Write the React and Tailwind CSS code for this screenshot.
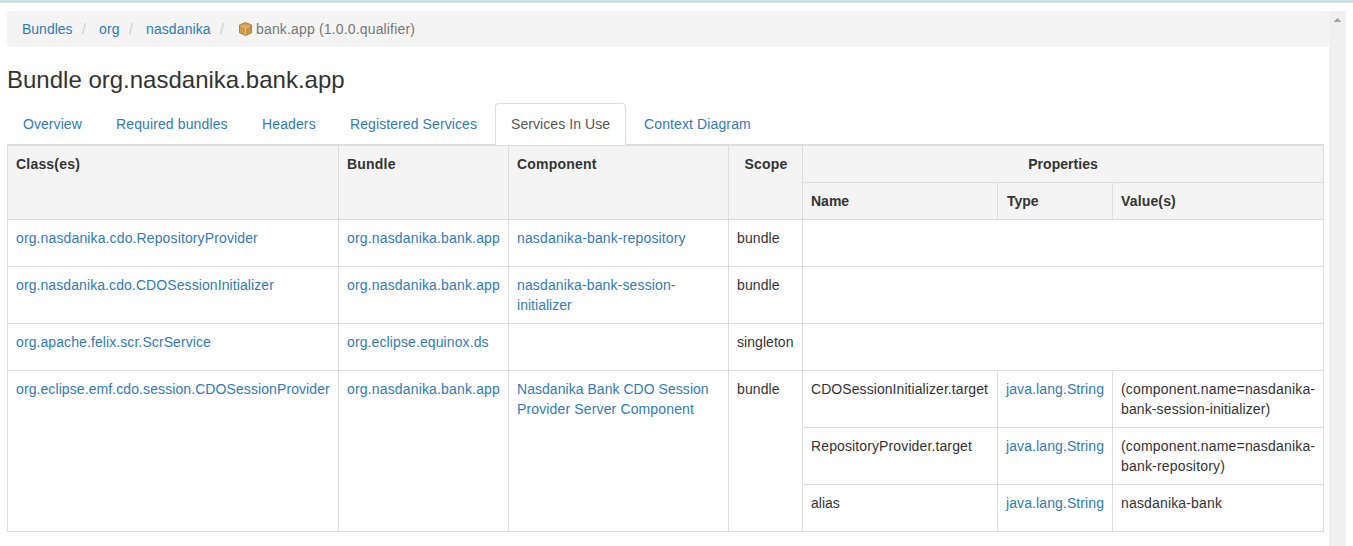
function Link({ children, className = "" }) {
  return <a className={`text-[#337ab7] ${className}`}>{children}</a>;
}

function BundleIcon() {
  return (
    <svg width="16" height="16" viewBox="0 0 16 16" className="mr-[3px] -ml-px block shrink-0">
      <path d="M8.500 1.500 14.500 4v7.800L8.500 14.500 2.500 11.800V4z" fill="#cf9c4c" stroke="#a98045" strokeWidth="1" strokeLinejoin="round" />
      <path d="M8.500 6.500 14 4.400v7.200L8.500 14z" fill="#c79445" />
      <path d="M8.500 6.500V13.500M3.500 4.500l5 2 5-2" stroke="#e6c384" strokeWidth="1" fill="none" />
      <path d="M6 3.200 11 5.500v2.500" stroke="#e0b870" strokeWidth="0.800" fill="none" />
    </svg>
  );
}

function Th({ className = "text-left tracking-[0.2px]", children, ...rest }) {
  return (
    <th className={`border-r border-b border-[#ddd] bg-[#f4f4f4] px-2 pt-2 align-top font-bold ${className}`} {...rest}>
      {children}
    </th>
  );
}

function Td({ className = "", children, ...rest }) {
  return (
    <td className={`border-r border-b border-[#ddd] px-2 pt-2 align-top whitespace-nowrap ${className}`} {...rest}>
      {children}
    </td>
  );
}

const tabs = [
  { label: "Overview", width: "w-[93px] tracking-[0.06px]" },
  { label: "Required bundles", width: "w-[146px] tracking-[0.12px]" },
  { label: "Headers", width: "w-[88px] tracking-[0.12px]" },
  { label: "Registered Services", width: "w-[161px] tracking-[0.09px]" },
  { label: "Services In Use", width: "w-[131px] mr-0.5 tracking-[0.07px]", active: true },
  { label: "Context Diagram", width: "w-[139px] tracking-[0.12px]" },
];

export default function App() {
  return (
    <div className="flex h-[546px] w-[1353px] flex-col overflow-hidden bg-white font-['Liberation_Sans',Arial,sans-serif] text-[14px] leading-5 text-[#333]">
      <div className="h-[3px] shrink-0 border-b border-[#ddd] bg-[#c4e3f0]" />
      <div className="mt-2 flex min-h-0 flex-1 pl-[7px]">
        <main className="w-[1322px] shrink-0">
          <ol className="flex h-9 items-center rounded bg-[#f4f4f4] pl-[15px]">
            <li className="w-[60px]"><Link>Bundles</Link></li>
            <li className="w-[17px] text-[#ccc]">/</li>
            <li className="w-[30px]"><Link className="tracking-[0.1px]">org</Link></li>
            <li className="w-[17px] text-[#ccc]">/</li>
            <li className="w-[74px]"><Link className="tracking-[0.1px]">nasdanika</Link></li>
            <li className="w-[17px] text-[#ccc]">/</li>
            <li className="flex items-center pl-px text-[#777]">
              <BundleIcon />
              <span className="tracking-[0.16px]">bank.app (1.0.0.qualifier)</span>
            </li>
          </ol>
          <h3 className="mt-5 mb-[10px] text-[24px] leading-[26px]">Bundle org.nasdanika.bank.app</h3>
          <nav className="relative z-10 flex h-[42px] w-[1317px] border-b border-[#ddd]">
            {tabs.map((t) => (
              <div
                key={t.label}
                className={`h-[42px] rounded-t border px-[15px] py-[10px] whitespace-nowrap ${t.width} ${
                  t.active ? "border-[#ddd] border-b-white bg-white text-[#555]" : "border-transparent text-[#337ab7]"
                }`}
              >
                {t.label}
              </div>
            ))}
          </nav>
          <table className="w-[1317px] table-fixed border-separate border-spacing-0 border-t border-l border-[#ddd]">
            <colgroup>
              <col className="w-[331px]" />
              <col className="w-[170px]" />
              <col className="w-[220px]" />
              <col className="w-[74px]" />
              <col className="w-[195px]" />
              <col className="w-[115px]" />
              <col className="w-[211px]" />
            </colgroup>
            <thead>
              <tr className="h-[37px]">
                <Th rowSpan={2}>Class(es)</Th>
                <Th rowSpan={2}>Bundle</Th>
                <Th rowSpan={2}>Component</Th>
                <Th rowSpan={2} className="pl-[9px] text-center tracking-[0.15px]">Scope</Th>
                <Th colSpan={3} className="text-center tracking-[0.05px]">Properties</Th>
              </tr>
              <tr className="h-[37px]">
                <Th className="text-left">Name</Th>
                <Th className="pl-[9px] text-left">Type</Th>
                <Th className="text-left tracking-[0.15px]">Value(s)</Th>
              </tr>
            </thead>
            <tbody>
              <tr className="h-[47px]">
                <Td><Link className="tracking-[0.125px]">org.nasdanika.cdo.RepositoryProvider</Link></Td>
                <Td><Link className="tracking-[0.16px]">org.nasdanika.bank.app</Link></Td>
                <Td><Link className="tracking-[0.15px]">nasdanika-bank-repository</Link></Td>
                <Td className="tracking-[0.1px]">bundle</Td>
                <Td colSpan={3} />
              </tr>
              <tr className="h-[57px]">
                <Td><Link className="tracking-[0.09px]">org.nasdanika.cdo.CDOSessionInitializer</Link></Td>
                <Td><Link className="tracking-[0.16px]">org.nasdanika.bank.app</Link></Td>
                <Td>
                  <Link className="tracking-[0.13px]">nasdanika-bank-session-<br /><span className="tracking-[0.03px]">initializer</span></Link>
                </Td>
                <Td className="tracking-[0.1px]">bundle</Td>
                <Td colSpan={3} />
              </tr>
              <tr className="h-[47px]">
                <Td><Link className="tracking-[0.09px]">org.apache.felix.scr.ScrService</Link></Td>
                <Td><Link className="tracking-[0.11px]">org.eclipse.equinox.ds</Link></Td>
                <Td />
                <Td className="tracking-[0.05px]">singleton</Td>
                <Td colSpan={3} />
              </tr>
              <tr className="h-[57px]">
                <Td rowSpan={3}><Link className="tracking-[0.09px]">org.eclipse.emf.cdo.session.CDOSessionProvider</Link></Td>
                <Td rowSpan={3}><Link className="tracking-[0.16px]">org.nasdanika.bank.app</Link></Td>
                <Td rowSpan={3}>
                  <Link className="tracking-[0.04px]">Nasdanika Bank CDO Session<br /><span className="tracking-[0.14px]">Provider Server Component</span></Link>
                </Td>
                <Td rowSpan={3} className="tracking-[0.1px]">bundle</Td>
                <Td className="tracking-[0.07px]">CDOSessionInitializer.target</Td>
                <Td><Link className="tracking-[0.1px]">java.lang.String</Link></Td>
                <Td className="tracking-[0.18px]">(component.name=nasdanika-<br /><span className="tracking-[0.12px]">bank-session-initializer)</span></Td>
              </tr>
              <tr className="h-[57px]">
                <Td className="tracking-[0.12px]">RepositoryProvider.target</Td>
                <Td><Link className="tracking-[0.1px]">java.lang.String</Link></Td>
                <Td className="tracking-[0.18px]">(component.name=nasdanika-<br />bank-repository)</Td>
              </tr>
              <tr className="h-[47px]">
                <Td>alias</Td>
                <Td><Link className="tracking-[0.1px]">java.lang.String</Link></Td>
                <Td className="tracking-[0.16px]">nasdanika-bank</Td>
              </tr>
            </tbody>
          </table>
        </main>
        <div className="flex w-[17px] shrink-0 justify-center bg-[#f0f0f0] pt-[7px]">
          <svg width="7" height="4" viewBox="0 0 7 4" shapeRendering="crispEdges">
            <path d="M3 0h1v1h1v1h1v1h1v1H0V3h1V2h1V1h1z" fill="#a3a3a3" />
          </svg>
        </div>
      </div>
    </div>
  );
}
